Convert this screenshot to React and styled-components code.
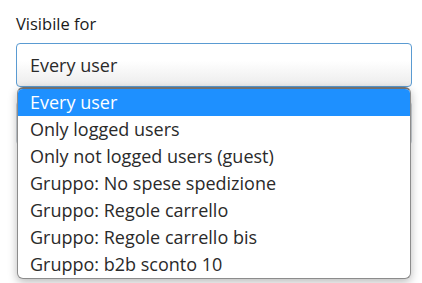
import React from "react"
import styled, { createGlobalStyle } from "styled-components"

const GlobalStyle = createGlobalStyle`
  html, body {
    margin: 0;
    padding: 0;
    background: #ffffff;
    overflow: hidden;
  }
  body {
    font-family: "Open Sans", "Noto Sans", sans-serif;
    color: #212529;
  }
`

const Page = styled.div`
  padding: 12px 10px 0 16px;
  height: 283px;
  box-sizing: border-box;
  overflow: hidden;
`

const Label = styled.div`
  font-size: 16.5px;
  line-height: 24px;
  color: #1a1a1a;
  margin-bottom: 7px;
`

const Field = styled.div`
  position: relative;
  margin-bottom: 14px;
`

const SelectBox = styled.div`
  height: 44px;
  box-sizing: border-box;
  border: 1px solid #5a9bd2;
  border-radius: 4px;
  padding: 0 13px;
  display: flex;
  align-items: center;
  font-size: 18px;
  color: #2a2a2a;
  background: linear-gradient(to bottom, #ffffff 40%, #ececec 100%);
`

const Menu = styled.ul`
  position: absolute;
  top: 44px;
  left: 1px;
  right: 1px;
  margin: 0;
  padding: 0;
  list-style: none;
  background: #ffffff;
  border: 1px solid #8c8c8c;
  border-top: 2px solid #707070;
  border-radius: 6px;
  overflow: hidden;
  box-shadow: 0 3px 10px rgba(0, 0, 0, 0.28);
  z-index: 2;
`

const Option = styled.li`
  height: 27px;
  line-height: 27px;
  padding: 0 12px;
  font-size: 18px;
  color: ${(p) => (p.$active ? "#ffffff" : "#2a2a2a")};
  background: ${(p) => (p.$active ? "#1e90ff" : "transparent")};
  white-space: nowrap;
`

const NextInput = styled.div`
  height: 44px;
  box-sizing: border-box;
  border: 1px solid #ced4da;
  border-radius: 4px;
  background: #e9ecef;
`

const options = [
  "Every user",
  "Only logged users",
  "Only not logged users (guest)",
  "Gruppo: No spese spedizione",
  "Gruppo: Regole carrello",
  "Gruppo: Regole carrello bis",
  "Gruppo: b2b sconto 10",
]

export default function App() {
  return (
    <>
      <GlobalStyle />
      <Page>
        <Label>Visibile for</Label>
        <Field>
          <SelectBox>Every user</SelectBox>
          <Menu>
            {options.map((o, i) => (
              <Option key={o} $active={i === 0}>
                {o}
              </Option>
            ))}
          </Menu>
        </Field>
        <Field>
          <NextInput />
        </Field>
      </Page>
    </>
  )
}
